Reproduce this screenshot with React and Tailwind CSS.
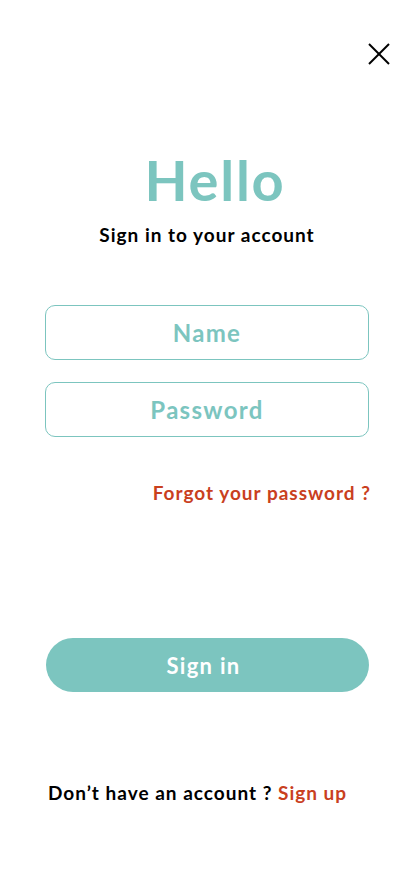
import React from 'react'

function CloseIcon() {
  return (
    <svg width="22" height="22" viewBox="0 0 22 22" fill="none" stroke="#000" strokeWidth="2">
      <line x1="1" y1="1" x2="21" y2="21" />
      <line x1="21" y1="1" x2="1" y2="21" />
    </svg>
  )
}

export default function App() {
  return (
    <div className="min-h-[896px] w-[414px] bg-white font-['Lato','Noto_Sans',sans-serif] font-bold">
      {/* Close */}
      <div className="flex justify-end pt-[43px] pr-[24px]">
        <button className="leading-none">
          <CloseIcon />
        </button>
      </div>

      {/* Heading */}
      <div className="flex flex-col items-center">
        <h1 className="mt-[87px] ml-[16px] text-[56px] leading-none tracking-[1.8px] text-[#7cc5bf]">Hello</h1>
        <p className="mt-[17px] text-[19px] leading-none tracking-[1px] text-black">Sign in to your account</p>
      </div>

      {/* Form */}
      <form className="mt-[61px] flex flex-col px-[45px]">
        <input
          placeholder="Name"
          className="h-[55px] rounded-[10px] border border-[#7cc5bf] text-center text-[24px] tracking-[1.3px] text-[#7cc5bf] placeholder:text-[#7cc5bf] outline-none"
        />
        <input
          type="password"
          placeholder="Password"
          className="mt-[22px] h-[55px] rounded-[10px] border border-[#7cc5bf] text-center text-[24px] tracking-[1.3px] text-[#7cc5bf] placeholder:text-[#7cc5bf] outline-none"
        />
        <div className="mt-[46px] mr-[-2px] flex justify-end">
          <a className="text-[19px] leading-none tracking-[1px] text-[#c9401e]">Forgot your password ?</a>
        </div>
        <button
          type="button"
          className="mt-[136px] ml-[1px] h-[54px] rounded-full bg-[#7cc5bf] pr-[8px] text-[22px] tracking-[1.3px] text-white"
        >
          Sign in
        </button>
      </form>

      {/* Footer */}
      <p className="mt-[91px] pl-[48px] text-[19px] leading-none tracking-[1px] text-black">
        Don’t have an account ? <span className="text-[#c9401e]">Sign up</span>
      </p>
    </div>
  )
}
